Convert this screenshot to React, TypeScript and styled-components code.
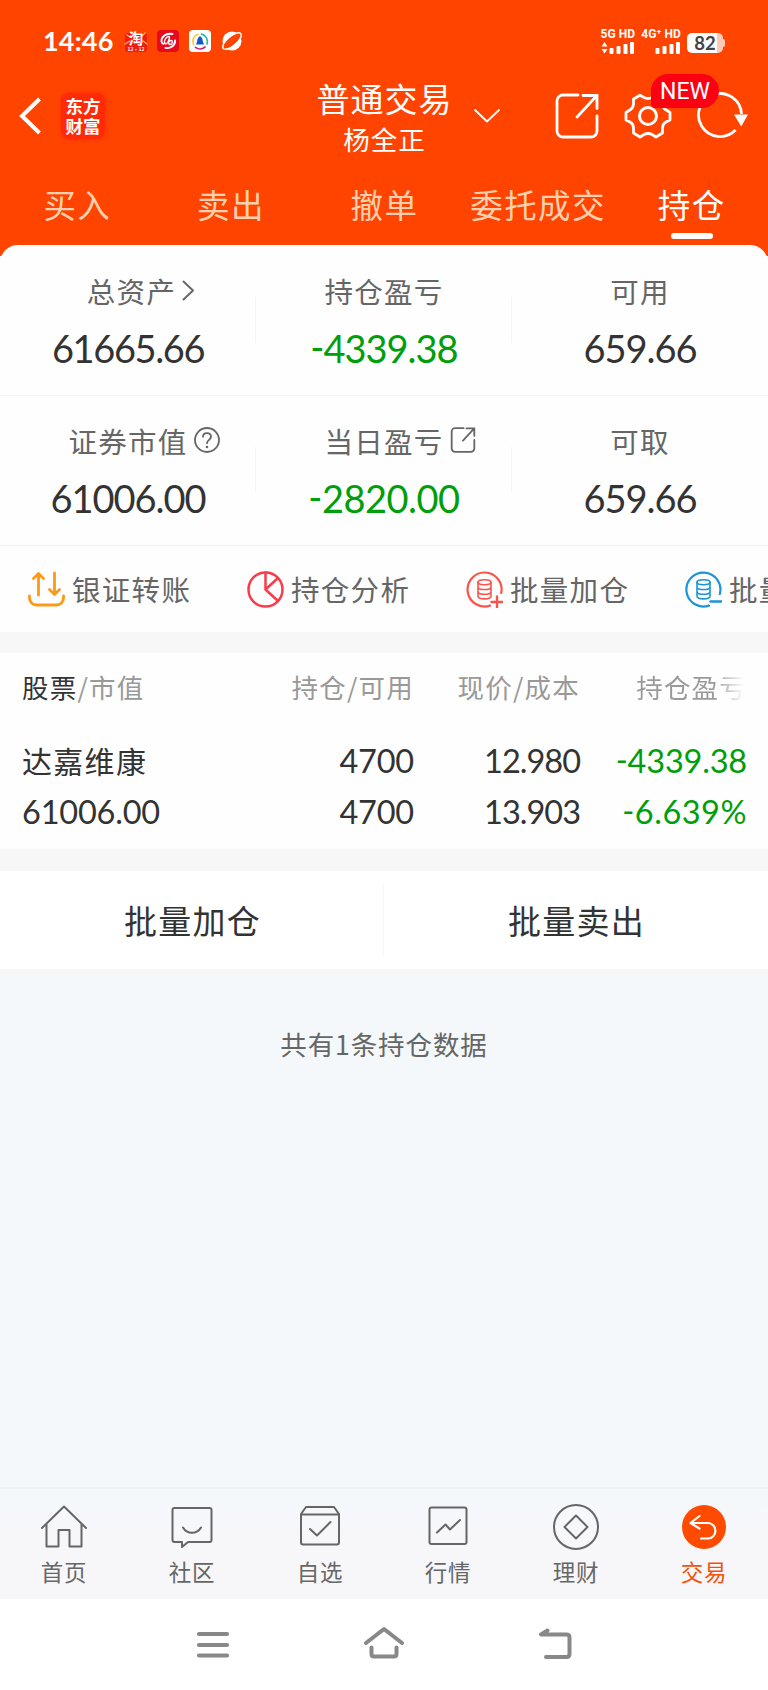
import React from "react";
import styled, { createGlobalStyle } from "styled-components";

const GlobalStyle = createGlobalStyle`
  *, *::before, *::after { box-sizing: border-box; }
  html, body { margin: 0; padding: 0; }
  body { background: #f4f8fa; overflow-x: hidden; }
  svg { display: block; flex: none; }
`;

const CJK = `"Noto Sans CJK SC", sans-serif`;
const NUM = `Lato, "Noto Sans CJK SC", sans-serif`;
const ORANGE = "#ff4400";

const Screen = styled.div`
  width: 768px;
  height: 1690px;
  display: flex;
  flex-direction: column;
  overflow: hidden;
  background: #f4f8fa;
  font-family: ${CJK};
  color: #333;
  white-space: nowrap;
`;

/* ---------- header ---------- */
const Header = styled.header`
  height: 256px;
  flex: none;
  background: ${ORANGE};
  color: #fff;
  display: flex;
  flex-direction: column;
`;

const StatusBar = styled.div`
  height: 72px;
  padding: 10px 43px 0 43px;
  display: flex;
  align-items: center;
  justify-content: space-between;
`;

const StatusGroup = styled.div<{ $gap: number }>`
  display: flex;
  align-items: center;
  gap: ${(p) => p.$gap}px;
`;

const Clock = styled.span`
  width: 72px;
  font: 700 27px/30px ${NUM};
  letter-spacing: 0.2px;
`;

const Signal = styled.div`
  display: flex;
  flex-direction: column;
  align-items: flex-end;
  gap: 2px;
  font: 700 12px/11px Roboto, sans-serif;
  letter-spacing: 0.1px;
`;

const Battery = styled.div`
  display: flex;
  align-items: center;
  margin-top: 3px;
  &::after {
    content: "";
    width: 2px;
    height: 8px;
    border-radius: 0 2px 2px 0;
    background: #ffc9b5;
  }
`;

const BatteryLevel = styled.div`
  width: 36px;
  height: 20px;
  border-radius: 5px;
  background: linear-gradient(90deg, #fff 82%, #ffc9b5 82%);
  color: #444;
  text-align: center;
  font: 700 18.5px/20px ${NUM};
`;

const TitleBar = styled.div`
  height: 88px;
  padding: 0 20px 0 19px;
  display: grid;
  grid-template-columns: 1fr 136px 1fr;
  align-items: center;
`;

const TitleSide = styled.div<{ $gap: number; $end?: boolean }>`
  display: flex;
  align-items: center;
  gap: ${(p) => p.$gap}px;
  justify-content: ${(p) => (p.$end ? "flex-end" : "flex-start")};
`;

const Logo = styled.div`
  width: 44px;
  height: 46px;
  border-radius: 8px;
  background: #ff2a08;
  box-shadow: 0 0 4px #ff2a08;
  display: grid;
  place-content: center;
  text-align: center;
  font: 700 17.5px/20.5px ${CJK};
`;

const TitleText = styled.div`
  display: flex;
  flex-direction: column;
  align-items: center;
  padding: 2px 0 0 2px;
`;

const Account = styled.div`
  font-size: 33px;
  line-height: 42px;
  letter-spacing: 1px;
`;

const Owner = styled.div`
  font-size: 26.5px;
  line-height: 39px;
  letter-spacing: 1px;
`;

const Expand = styled.div`
  margin-right: 30px;
`;

const BadgeAnchor = styled.div`
  position: relative;
`;

const NewBadge = styled.span`
  position: absolute;
  left: 27px;
  top: -18px;
  z-index: 1;
  width: 68px;
  height: 34px;
  border-radius: 17px 17px 17px 4px;
  background: #fb0012;
  text-align: center;
  font: 400 23px/35px Roboto, sans-serif;
`;

const Tabs = styled.nav`
  display: grid;
  grid-template-columns: repeat(5, 1fr);
  height: 85px;
`;

const Tab = styled.div<{ $active?: boolean }>`
  display: flex;
  flex-direction: column;
  align-items: center;
  padding: 20px 0 0 1px;
  font-size: 32.5px;
  line-height: 48px;
  letter-spacing: 1.4px;
  color: ${(p) => (p.$active ? "#fff" : "#ffd0b0")};
  &::after {
    content: "";
    width: 42px;
    height: 6px;
    margin-top: 5px;
    border-radius: 3px;
    background: ${(p) => (p.$active ? "#fff" : "transparent")};
  }
`;

/* ---------- account summary ---------- */
const Sheet = styled.section`
  margin-top: -11px;
  flex: none;
  padding-top: 1px;
  background: #fefefe;
  border-radius: 18px 18px 0 0;
`;

const StatRow = styled.div`
  height: 150px;
  display: grid;
  grid-template-columns: repeat(3, 1fr);
  border-bottom: 1px solid #f2f2f2;
`;

const Stat = styled.div`
  display: flex;
  flex-direction: column;
  align-items: center;
  padding-top: 22px;
  background: linear-gradient(#f6f6f6, #f6f6f6) right 51px / 1px 46px no-repeat;
  &:last-child { background: none; }
`;

const StatLabel = styled.div<{ $indent?: number }>`
  display: flex;
  align-items: center;
  height: 44px;
  padding-left: ${(p) => p.$indent ?? 0}px;
  font-size: 28.5px;
  letter-spacing: 1.3px;
  color: #666;
`;

/* zero-width slot, so that a trailing icon leaves the label centred */
const LabelIcon = styled.span`
  width: 0;
  display: flex;
  & > svg { margin-left: 6px; }
`;

const StatValue = styled.div<{ $down?: boolean; $track?: number }>`
  margin-top: 12px;
  font: 400 38px/48px ${NUM};
  font-variant-numeric: tabular-nums;
  font-feature-settings: "case";
  letter-spacing: ${(p) => p.$track ?? -1}px;
  color: ${(p) => (p.$down ? "#009e0a" : "#333")};
`;

const Shortcuts = styled.div`
  height: 86px;
  padding-left: 28px;
  display: flex;
  align-items: center;
  overflow: hidden;
`;

const Shortcut = styled.div`
  flex: none;
  width: 219px;
  display: flex;
  align-items: center;
  gap: 7px;
  font-size: 28.5px;
  line-height: 44px;
  letter-spacing: 1.3px;
  color: #666;
`;

const Divider = styled.div<{ $h: number }>`
  height: ${(p) => p.$h}px;
  flex: none;
  background: #f7f7f7;
`;

/* ---------- holdings ---------- */
const Holdings = styled.section`
  height: 196px;
  flex: none;
  padding: 8px 21px 0 22px;
  background: #fefefe;
`;

const HoldingRow = styled.div`
  display: grid;
  grid-template-columns: 222px 170px 166px 167px;
  height: 51px;
  line-height: 51px;
  text-align: right;
  & > :first-child { text-align: left; }
`;

const HoldingHead = styled(HoldingRow)`
  margin-bottom: 23px;
  font-size: 26.5px;
  letter-spacing: 1.2px;
  color: #999;
`;

const Strong = styled.span`
  color: #333;
`;

const Faded = styled.span`
  color: transparent;
  background: linear-gradient(90deg, #999 70%, #ffffff 98%);
  background-clip: text;
`;

const StockName = styled.div`
  font-size: 30px;
  letter-spacing: 1.3px;
`;

const Figure = styled.div<{ $down?: boolean; $track?: number }>`
  font-family: ${NUM};
  font-size: 32.5px;
  font-variant-numeric: tabular-nums;
  font-feature-settings: "case";
  letter-spacing: ${(p) => p.$track ?? -0.2}px;
  color: ${(p) => (p.$down ? "#009e0a" : "#333")};
`;

const BatchBar = styled.div`
  height: 98px;
  flex: none;
  display: grid;
  grid-template-columns: 1fr 1fr;
  background: #fff;
`;

const BatchButton = styled.div`
  padding: 1px 0 0 1px;
  text-align: center;
  font-size: 33px;
  line-height: 96px;
  letter-spacing: 1.2px;
  &:first-child {
    background: linear-gradient(#f6f6f6, #f6f6f6) right center / 1px 72px no-repeat;
  }
`;

const Summary = styled.div`
  flex: 1;
  padding-top: 48px;
  text-align: center;
  font-size: 26.5px;
  line-height: 40px;
  letter-spacing: 0.9px;
  color: #666;
`;

/* ---------- bottom bars ---------- */
const BottomNav = styled.nav`
  height: 112px;
  flex: none;
  display: grid;
  grid-template-columns: repeat(6, 1fr);
  border-top: 2px solid #eef1f3;
  background: linear-gradient(#f4f8fa, #f7f7fa 40%);
`;

const NavItem = styled.div<{ $active?: boolean }>`
  display: flex;
  flex-direction: column;
  align-items: center;
  padding-top: 14px;
  font-size: 22.5px;
  line-height: 34px;
  letter-spacing: 0.8px;
  color: ${(p) => (p.$active ? "#f4510b" : "#666")};
  & > svg { margin-bottom: 3px; }
`;

const SystemNav = styled.div`
  height: 91px;
  flex: none;
  padding: 0 127px;
  display: grid;
  grid-template-columns: repeat(3, 1fr);
  place-items: center;
  background: #fff;
`;

/* ---------- icons ---------- */
const line = (w: number, color = "currentColor") => ({
  fill: "none",
  stroke: color,
  strokeWidth: w,
  strokeLinecap: "round" as const,
  strokeLinejoin: "round" as const,
});

const MiniText = styled.text`
  font-family: ${CJK};
  font-weight: 700;
  fill: #fff;
  text-anchor: middle;
`;

const TaoIcon = () => (
  <svg width="22" height="22" viewBox="0 0 22 22" overflow="visible">
    <rect y="3" width="22" height="19" rx="3" fill="#ee1c12" />
    <path d="M0 14l5-3M22 14l-4-3M2 5l3 2M20 3l-3 3" {...line(1.4, "#ffb35c")} />
    <MiniText x="11" y="13.500" fontSize="14.500">淘</MiniText>
    <MiniText x="11" y="20.500" fontSize="5">12·12</MiniText>
  </svg>
);

const SpiralIcon = () => (
  <svg width="22" height="22" viewBox="0 0 22 22">
    <rect width="22" height="22" rx="4" fill="#e60a1c" />
    <path d="M15.500 4C9 2.500 4 7 4.500 11.500c.2 1.500 1 2.200 2 2.400M8.500 18c5.500.8 10-3 9.500-7.500" {...line(1.9, "#fff")} />
    <path d="M12.500 6.500c-4 0-6 5-4.500 7 1.600 1.500 3.500-1.500 4.500-5.500l-.8 5c0 2 2.800 2 3.500-.3.600-2-.8-3-2.200-1.700" {...line(1.4, "#fff")} />
  </svg>
);

const DropIcon = () => (
  <svg width="22" height="22" viewBox="0 0 22 22">
    <rect width="22" height="22" rx="4" fill="#fff" />
    <path d="M4.500 14.500A7.500 7.500 0 0 1 9 4.300" {...line(1.7, "#f3cf3a")} />
    <path d="M12.500 4.200A7.500 7.500 0 0 1 18 14" {...line(1.7, "#27b9a4")} />
    <path d="M6.500 17.300a7.500 7.500 0 0 0 9.500-.3" {...line(1.7, "#d8207c")} />
    <path d="M11 6c2.200 1.600 2.800 3.500 2.800 5.500l1.200 3H7l1.200-3C8.200 9.500 8.800 7.600 11 6z" fill="#1557c8" />
  </svg>
);

const OrbitIcon = () => (
  <svg width="22" height="22" viewBox="0 0 22 22">
    <circle cx="11" cy="11" r="9.500" fill="#fff" />
    <ellipse cx="11" cy="11" rx="11.500" ry="4.600" transform="rotate(-40 11 11)" fill={ORANGE} stroke="#fff" strokeWidth="1.400" />
  </svg>
);

const Bars = ({ arrows }: { arrows?: boolean }) => (
  <svg width="34" height="12" viewBox="0 0 34 12" fill="#fff">
    {arrows && <path d="M3.500 0l3 4.500h-6zM3.500 11.500l3-4.500h-6z" />}
    <rect x="8.500" y="6" width="4" height="6" rx="1" />
    <rect x="15.500" y="4" width="4" height="8" rx="1" />
    <rect x="22.500" y="2" width="4" height="10" rx="1" />
    <rect x="29" y="0" width="4" height="12" rx="1" />
  </svg>
);

const BackIcon = () => (
  <svg width="24" height="40" viewBox="0 0 24 40">
    <path d="M20.500 3L3 20l17.500 17" {...line(4)} strokeLinecap="butt" strokeLinejoin="miter" />
  </svg>
);

const DownIcon = () => (
  <svg width="26" height="14" viewBox="0 0 26 14">
    <path d="M1 1l12 11.500L25 1" {...line(1.8)} />
  </svg>
);

const ShareIcon = ({ size, weight }: { size: number; weight: number }) => (
  <svg width={size} height={size} viewBox="0 0 46 46">
    <path d="M24 2H9a6 6 0 0 0-6 6v30a6 6 0 0 0 6 6h28a6 6 0 0 0 6-6V23M29 2.500h14v13M42 3.500L23 24" {...line(weight)} strokeLinejoin="miter" />
  </svg>
);

const GearIcon = () => (
  <svg width="48" height="48" viewBox="0 0 48 48">
    <path
      d="M16 3.200L20 5.500Q24 7.500 28 5.500L32 3.200L38.500 7V12Q39 16.500 43 18.500L46 20.500V28L42 30Q38.500 32 38.500 36V41L32 45L28 42.500Q24 40.500 20 42.500L16 45L9.500 41V36Q9.500 32 6 30L2 28V20.500L5 18.500Q9 16.500 9.500 12V7Z"
      {...line(2.8)}
    />
    <circle cx="24" cy="24" r="8.500" {...line(3)} />
  </svg>
);

const RefreshIcon = () => (
  <svg width="52" height="48" viewBox="0 0 52 48">
    <path d="M39.500 38A21.500 21.500 0 1 1 45.500 22" {...line(2.8)} strokeLinecap="butt" />
    <path d="M38 22.500h14l-6.800 12z" fill="currentColor" />
  </svg>
);

const ChevronIcon = () => (
  <svg width="13" height="21" viewBox="0 0 13 21">
    <path d="M1.500 1.500l9.500 9-9.500 9" {...line(1.9)} />
  </svg>
);

const HelpIcon = () => (
  <svg width="26" height="26" viewBox="0 0 26 26">
    <circle cx="13" cy="13" r="12" {...line(1.8)} />
    <path d="M9 9.800c.2-5 8-4.600 8 0 0 3-4 3.200-4 6.400" {...line(1.8)} />
    <circle cx="13" cy="20" r="1.300" fill="currentColor" />
  </svg>
);

const TransferIcon = () => (
  <svg width="37" height="37" viewBox="0 0 37 37">
    <path d="M1.500 25v2a7 7 0 0 0 7 7h20a7 7 0 0 0 7-7v-2M10.500 24V3M5.500 7.500l5-5 5 5M26.500 2v21M21.500 18.500l5 5 5-5" {...line(2.8, "#fb9a17")} />
  </svg>
);

const PieIcon = () => (
  <svg width="37" height="37" viewBox="0 0 37 37">
    <circle cx="18.500" cy="18.500" r="17" {...line(2.500, "#f93b4b")} />
    <path d="M18.500 1.500v17L31 30M18.500 18.500L31 7" {...line(2.500, "#f93b4b")} />
  </svg>
);

const CoinIcon = ({ minus }: { minus?: boolean }) => {
  const color = minus ? "#1b94d8" : "#f8554a";
  return (
    <svg width="37" height="37" viewBox="0 0 37 37">
      <path d={minus ? "M24 34.600A17 17 0 1 1 34.800 23" : "M24 34.600A17 17 0 1 1 35.200 22"} {...line(2.200, color)} />
      <ellipse cx="18.500" cy="11.300" rx="6.500" ry="2.500" {...line(1.6, color)} />
      <path d="M12 11.300v14c0 3.400 13 3.400 13 0v-14M12 16c0 3.400 13 3.400 13 0M12 20.700c0 3.400 13 3.400 13 0" {...line(1.6, color)} />
      <path d={minus ? "M25.500 30.500h11" : "M25.500 31h11M31 25.500v11"} {...line(2.400, color)} />
    </svg>
  );
};

const HomeIcon = () => (
  <svg width="48" height="48" viewBox="0 0 48 48">
    <path d="M2 25L24 3.500 46 25M6.500 21v22.500h12V27H29.500v16.500h12V21" {...line(2)} />
  </svg>
);

const ChatIcon = () => (
  <svg width="48" height="48" viewBox="0 0 48 48">
    <path d="M6.500 5h35a2 2 0 0 1 2 2v30a2 2 0 0 1-2 2H20l-6 5v-5H6.500a2 2 0 0 1-2-2V7a2 2 0 0 1 2-2zM15 24.500c4 7 14 7 18 0" {...line(2)} />
  </svg>
);

const BoxIcon = () => (
  <svg width="48" height="48" viewBox="0 0 48 48">
    <path d="M5 11l5-7h28l5 7v28.500a2 2 0 0 1-2 2H7a2 2 0 0 1-2-2zM5 11.500h38M14 26l7 6.500L34.500 19" {...line(2)} />
  </svg>
);

const TrendIcon = () => (
  <svg width="48" height="48" viewBox="0 0 48 48">
    <rect x="5.500" y="4.500" width="37" height="36.500" rx="2" {...line(2)} />
    <path d="M13 29.500l8.500-8 4.500 5L36 17" {...line(2)} />
  </svg>
);

const FinanceIcon = () => (
  <svg width="48" height="48" viewBox="0 0 48 48">
    <circle cx="24" cy="24" r="22" {...line(2)} />
    <path d="M24 12.500L35.500 24 24 35.500 12.500 24z" {...line(2)} />
  </svg>
);

const TradeIcon = () => (
  <svg width="48" height="48" viewBox="0 0 48 48">
    <circle cx="24" cy="24" r="22" fill="#ff4b00" />
    <path d="M19.500 13l-9 7 9 5.500M11 20h17.500a7.800 7.800 0 0 1 0 15.500H21" {...line(2.2, "#fff")} />
  </svg>
);

const MenuIcon = () => (
  <svg width="34" height="28" viewBox="0 0 34 28">
    <path d="M3 3h28M3 14h28M3 24.500h28" {...line(4.200, "#888")} />
  </svg>
);

const SysHomeIcon = () => (
  <svg width="42" height="38" viewBox="0 0 42 38">
    <path d="M3 17L21 3l18 14M8.500 21.500v6.500q0 2.500 2.500 2.500h20q2.500 0 2.500-2.500v-6.500" {...line(4, "#888")} />
  </svg>
);

const SysBackIcon = () => (
  <svg width="36" height="34" viewBox="0 0 36 34">
    <path d="M10.500 2.500L4 6.500h25.500q3 0 3 3V26q0 3-3 3H9" {...line(4, "#888")} />
  </svg>
);

/* ---------- data ---------- */
const tabs = ["买入", "卖出", "撤单", "委托成交", "持仓"];

const stats = [
  [
    { label: "总资产", value: "61665.66", icon: <ChevronIcon />, indent: 7, track: -1.4 },
    { label: "持仓盈亏", value: "-4339.38", down: true },
    { label: "可用", value: "659.66" },
  ],
  [
    { label: "证券市值", value: "61006.00", icon: <HelpIcon /> },
    { label: "当日盈亏", value: "-2820.00", down: true, icon: <ShareIcon size={26} weight={3.2} />, track: -0.5 },
    { label: "可取", value: "659.66" },
  ],
];

const shortcuts = [
  { label: "银证转账", icon: <TransferIcon /> },
  { label: "持仓分析", icon: <PieIcon /> },
  { label: "批量加仓", icon: <CoinIcon /> },
  { label: "批量卖出", icon: <CoinIcon minus /> },
];

const navItems = [
  { label: "首页", icon: <HomeIcon /> },
  { label: "社区", icon: <ChatIcon /> },
  { label: "自选", icon: <BoxIcon /> },
  { label: "行情", icon: <TrendIcon /> },
  { label: "理财", icon: <FinanceIcon /> },
  { label: "交易", icon: <TradeIcon />, active: true },
];

export default function App() {
  return (
    <Screen>
      <GlobalStyle />
      <Header>
        <StatusBar>
          <StatusGroup $gap={10}>
            <Clock>14:46</Clock>
            <TaoIcon />
            <SpiralIcon />
            <DropIcon />
            <OrbitIcon />
          </StatusGroup>
          <StatusGroup $gap={6}>
            <Signal>5G HD<Bars arrows /></Signal>
            <Signal>4G⁺ HD<Bars /></Signal>
            <Battery><BatteryLevel>82</BatteryLevel></Battery>
          </StatusGroup>
        </StatusBar>
        <TitleBar>
          <TitleSide $gap={18}>
            <BackIcon />
            <Logo>东方<br />财富</Logo>
          </TitleSide>
          <TitleText>
            <Account>普通交易</Account>
            <Owner>杨全正</Owner>
          </TitleText>
          <TitleSide $gap={24} $end>
            <Expand><DownIcon /></Expand>
            <ShareIcon size={46} weight={2.8} />
            <BadgeAnchor>
              <GearIcon />
              <NewBadge>NEW</NewBadge>
            </BadgeAnchor>
            <RefreshIcon />
          </TitleSide>
        </TitleBar>
        <Tabs>
          {tabs.map((t) => (
            <Tab key={t} $active={t === "持仓"}>{t}</Tab>
          ))}
        </Tabs>
      </Header>

      <Sheet>
        {stats.map((row, i) => (
          <StatRow key={i}>
            {row.map((s) => (
              <Stat key={s.label}>
                <StatLabel $indent={s.indent}>
                  {s.label}
                  {s.icon && <LabelIcon>{s.icon}</LabelIcon>}
                </StatLabel>
                <StatValue $down={s.down} $track={s.track}>{s.value}</StatValue>
              </Stat>
            ))}
          </StatRow>
        ))}
        <Shortcuts>
          {shortcuts.map((s, i) => (
            <Shortcut key={i}>{s.icon}{s.label}</Shortcut>
          ))}
        </Shortcuts>
      </Sheet>

      <Divider $h={21} />
      <Holdings>
        <HoldingHead>
          <div><Strong>股票</Strong>/市值</div>
          <div>持仓/可用</div>
          <div>现价/成本</div>
          <div><Faded>持仓盈亏</Faded></div>
        </HoldingHead>
        <HoldingRow>
          <StockName>达嘉维康</StockName>
          <Figure>4700</Figure>
          <Figure $track={-1}>12.980</Figure>
          <Figure $down>-4339.38</Figure>
        </HoldingRow>
        <HoldingRow>
          <Figure>61006.00</Figure>
          <Figure>4700</Figure>
          <Figure $track={-1}>13.903</Figure>
          <Figure $down $track={0.5}>-6.639%</Figure>
        </HoldingRow>
      </Holdings>
      <Divider $h={22} />
      <BatchBar>
        <BatchButton>批量加仓</BatchButton>
        <BatchButton>批量卖出</BatchButton>
      </BatchBar>
      <Divider $h={7} />
      <Summary>共有1条持仓数据</Summary>

      <BottomNav>
        {navItems.map((n) => (
          <NavItem key={n.label} $active={n.active}>{n.icon}{n.label}</NavItem>
        ))}
      </BottomNav>
      <SystemNav>
        <MenuIcon />
        <SysHomeIcon />
        <SysBackIcon />
      </SystemNav>
    </Screen>
  );
}
